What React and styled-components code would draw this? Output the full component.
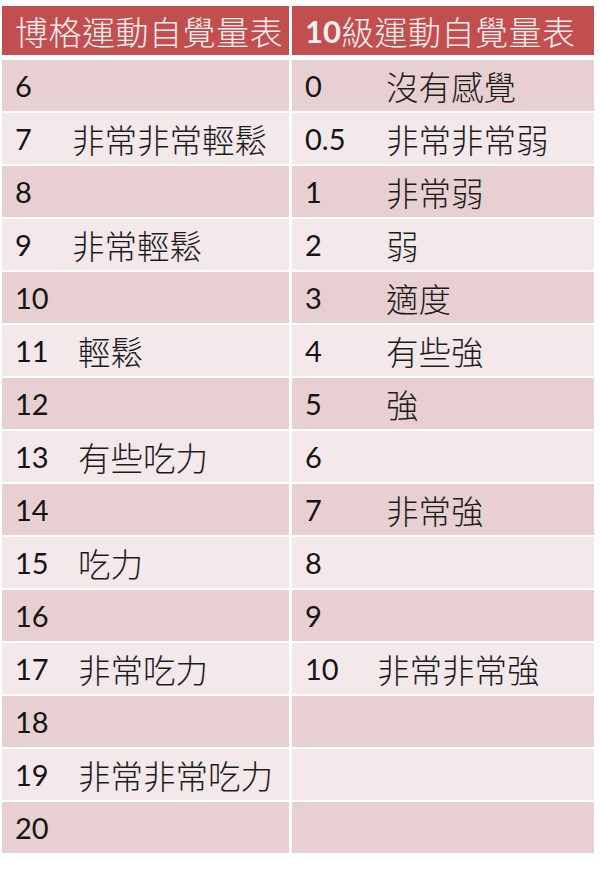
import React from 'react';
import styled, { createGlobalStyle } from 'styled-components';

const GlobalStyle = createGlobalStyle`
  html, body {
    margin: 0;
    padding: 0;
    background: #ffffff;
  }
`;

const Page = styled.div`
  width: 600px;
  height: 869px;
  padding: 6px 5px 0 2px;
  box-sizing: border-box;
  background: #ffffff;
`;

const Table = styled.div`
  display: grid;
  grid-template-columns: 287px 302px;
  column-gap: 3px;
`;

const HeaderRow = styled.div`
  display: contents;
`;

const HeaderCell = styled.div`
  height: 49px;
  margin-bottom: 5px;
  background: #c24f4f;
  color: #fbeeee;
  display: flex;
  align-items: center;
  padding-left: ${p => p.$pad}px;
  font-family: "Noto Sans CJK TC", "Noto Sans CJK SC", sans-serif;
  font-weight: 300;
  font-size: 33px;
  letter-spacing: 0.5px;
  white-space: nowrap;
  overflow: hidden;

  b {
    font-family: Lato, "Open Sans", sans-serif;
    font-weight: 700;
    font-size: 31px;
    letter-spacing: 0;
  }
`;

const Cell = styled.div`
  height: 51px;
  margin-bottom: 2px;
  background: ${p => (p.$dark ? '#e8cfd1' : '#f3e8ea')};
  display: flex;
  align-items: center;
  padding-left: 13px;
  position: relative;
  white-space: nowrap;
`;

const Num = styled.span`
  font-family: Lato, "Open Sans", sans-serif;
  font-size: 29px;
  color: #141414;
  width: ${p => p.$w}px;
  flex: none;
`;

const Label = styled.span`
  font-family: "Noto Sans CJK TC", "Noto Sans CJK SC", sans-serif;
  font-weight: 300;
  font-size: 32.5px;
  color: #1c1c1c;
  margin-left: ${p => p.$shift}px;
`;

const borg = [
  ['6', ''], ['7', '非常非常輕鬆'], ['8', ''], ['9', '非常輕鬆'], ['10', ''],
  ['11', '輕鬆'], ['12', ''], ['13', '有些吃力'], ['14', ''], ['15', '吃力'],
  ['16', ''], ['17', '非常吃力'], ['18', ''], ['19', '非常非常吃力'], ['20', ''],
];

const scale10 = [
  ['0', '沒有感覺'], ['0.5', '非常非常弱'], ['1', '非常弱'], ['2', '弱'], ['3', '適度'],
  ['4', '有些強'], ['5', '強'], ['6', ''], ['7', '非常強'], ['8', ''],
  ['9', ''], ['10', '非常非常強', -9], ['', ''], ['', ''], ['', ''],
];

export default function App() {
  return (
    <Page>
      <GlobalStyle />
      <Table>
        <HeaderRow>
          <HeaderCell $pad={13}>博格運動自覺量表</HeaderCell>
          <HeaderCell $pad={13}><b>10</b>級運動自覺量表</HeaderCell>
        </HeaderRow>
        {borg.map(([n, label], i) => {
          const [rn, rl, rs] = scale10[i];
          return (
            <React.Fragment key={n}>
              <Cell $dark={i % 2 === 0}>
                <Num $w={n.length > 1 ? 63 : 57}>{n}</Num>
                {label && <Label $shift={0}>{label}</Label>}
              </Cell>
              <Cell $dark={i % 2 === 0}>
                <Num $w={81}>{rn}</Num>
                {rl && <Label $shift={rs || 0}>{rl}</Label>}
              </Cell>
            </React.Fragment>
          );
        })}
      </Table>
    </Page>
  );
}
